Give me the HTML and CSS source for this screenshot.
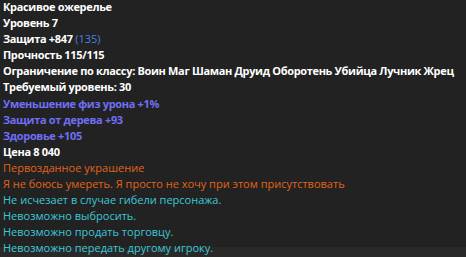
FILE: index.html
```html
<!DOCTYPE html>
<html lang="ru">
<head>
    <meta charset="UTF-8">
    <title>Красивое ожерелье</title>
    <link rel="stylesheet" href="styles.css">
</head>
<body>
    <div class="tooltip">
        <div class="line name">Красивое ожерелье</div>
        <div class="line">Уровень 7</div>
        <div class="line">Защита +847 <span class="extra">(135)</span></div>
        <div class="line">Прочность 115/115</div>
        <div class="line">Ограничение по классу: Воин Маг Шаман Друид Оборотень Убийца Лучник Жрец</div>
        <div class="line">Требуемый уровень: 30</div>
        <div class="line bonus">Уменьшение физ урона +1%</div>
        <div class="line bonus">Защита от дерева +93</div>
        <div class="line bonus">Здоровье +105</div>
        <div class="line">Цена 8 040</div>
        <div class="line note orange">Первозданное украшение</div>
        <div class="line note orange">Я не боюсь умереть. Я просто не хочу при этом присутствовать</div>
        <div class="line note cyan">Не исчезает в случае гибели персонажа.</div>
        <div class="line note cyan">Невозможно выбросить.</div>
        <div class="line note cyan">Невозможно продать торговцу.</div>
        <div class="line note cyan">Невозможно передать другому игроку.</div>
    </div>
</body>
</html>
```

FILE: styles.css
```css
body {
    margin: 0;
    background: linear-gradient(#222222 0, #222222 247px, #292929 247px);
    font-family: "Open Sans", "Noto Sans", sans-serif;
    font-size: 11px;
    color: #ffffff;
    height: 257px;
    overflow: hidden;
}

.tooltip {
    padding: 0 0 0 3px;
    margin-top: -1px;
}

.line {
    height: 16.1px;
    line-height: 16px;
    font-weight: bold;
    letter-spacing: -0.33px;
    white-space: nowrap;
}

.extra {
    font-weight: normal;
    letter-spacing: 0;
    color: #4f7fe0;
}

.bonus {
    color: #6f6ff5;
}

.note {
    font-weight: normal;
    letter-spacing: 0;
}

.orange {
    color: #e0641a;
}

.cyan {
    color: #3cc8d8;
}
```
